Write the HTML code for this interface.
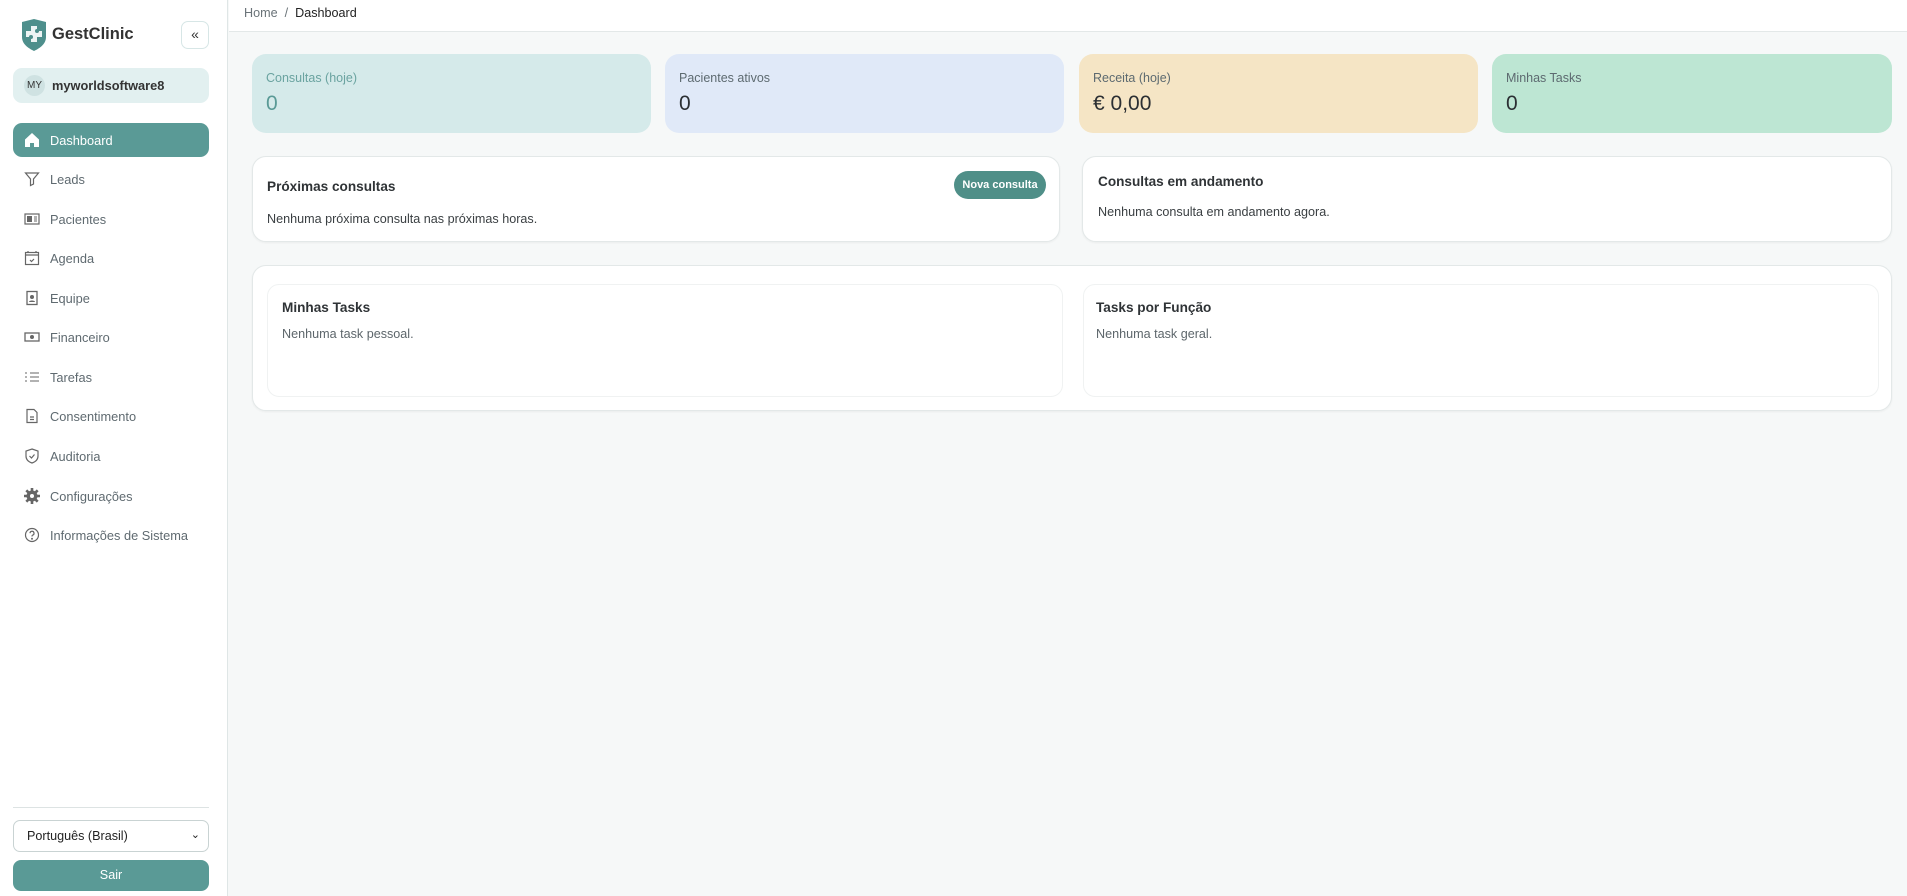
<!DOCTYPE html>
<html><head><meta charset="utf-8"><style>
*{box-sizing:border-box;margin:0;padding:0}
body{width:1907px;height:896px;overflow:hidden;background:#f6f8f8;font-family:"Liberation Sans",sans-serif;color:#2b2f33;position:relative}
.a{position:absolute}
#sb{left:0;top:0;width:228px;height:896px;background:#fff;border-right:1px solid #dfe6e6}
.mi{position:absolute;left:13px;width:196px;height:34px;display:flex;align-items:center;padding-left:11px;font-size:12.8px;color:#5f6a70}
.mi svg{width:16px;height:16px;margin-right:10px;flex:none}
.card{position:absolute;border-radius:14px}
.st .l{position:absolute;left:14px;top:17px;font-size:12.5px;color:#5d6a70}
.st .v{position:absolute;left:14px;top:38px;font-size:21px;color:#2b2f33}
.w{background:#fff;border:1px solid #e3e8e8;box-shadow:0 1px 2px rgba(0,0,0,.05)}
.h{font-size:13.6px;font-weight:bold;color:#2f3336}
.t{font-size:12.6px;color:#3a3f42}
</style></head><body>
<div id="sb" class="a">
 <svg class="a" style="left:20px;top:19px" width="28" height="32" viewBox="0 0 28 32"><path d="M2 3 L14 0 L26 3 V18 C26 25 20 29 14 32 C8 29 2 25 2 18Z" fill="#4e8f8c"/><path d="M11 7h6v5h5v6h-5v5h-6v-5H6v-6h5z" fill="#fff" opacity=".9"/><circle cx="11" cy="18" r="2" fill="#4e8f8c"/><circle cx="17" cy="12" r="2" fill="#4e8f8c"/></svg>
 <div class="a" style="left:52px;top:25px;font-size:16.5px;font-weight:bold;color:#333">GestClinic</div>
 <div class="a" style="left:181px;top:21px;width:28px;height:28px;border:1px solid #d7e6e6;border-radius:7px;font-size:14px;text-align:center;line-height:25px;color:#333">«</div>
 <div class="a" style="left:13px;top:68px;width:196px;height:35px;background:#e2f0f0;border-radius:9px"></div>
 <div class="a" style="left:24px;top:75px;width:21px;height:21px;border-radius:50%;background:#cfe2e2;font-size:10px;line-height:21px;text-align:center;color:#333">MY</div>
 <div class="a" style="left:52px;top:78px;font-size:12.8px;font-weight:bold;color:#333">myworldsoftware8</div>
 <div class="mi" style="top:123px;background:#5a9a96;color:#fff;border-radius:9px"><svg viewBox="0 0 16 16"><path d="M8 1L1 7.5V15h5v-4h4v4h5V7.5z" fill="#fff"/></svg>Dashboard</div>
 <div class="mi" style="top:162px"><svg viewBox="0 0 16 16" fill="none" stroke="#666" stroke-width="1.2"><path d="M1.5 2h13L9.5 8v5l-3 1.5V8z"/></svg>Leads</div>
 <div class="mi" style="top:202px"><svg viewBox="0 0 16 16"><rect x="1" y="3" width="14" height="10" fill="none" stroke="#666" stroke-width="1.2"/><rect x="3" y="5" width="5" height="6" fill="#666"/><path d="M10 6h3M10 8h3M10 10h3" stroke="#666"/></svg>Pacientes</div>
 <div class="mi" style="top:241px"><svg viewBox="0 0 16 16" fill="none" stroke="#666" stroke-width="1.2"><rect x="1.5" y="2.5" width="13" height="12"/><path d="M1.5 5h13M4 1v2M12 1v2M6 10l1.5 1.5L10 9"/></svg>Agenda</div>
 <div class="mi" style="top:281px"><svg viewBox="0 0 16 16"><rect x="3" y="1.5" width="10" height="13" fill="none" stroke="#666" stroke-width="1.3"/><circle cx="8" cy="7" r="2" fill="#666"/><path d="M5 12c0-2 6-2 6 0z" fill="#666"/></svg>Equipe</div>
 <div class="mi" style="top:320px"><svg viewBox="0 0 16 16"><rect x="1" y="4" width="14" height="8" fill="none" stroke="#666" stroke-width="1.3"/><circle cx="8" cy="8" r="2" fill="#666"/></svg>Financeiro</div>
 <div class="mi" style="top:360px"><svg viewBox="0 0 16 16" stroke="#666" stroke-width="1.1"><path d="M6 4h9M6 8h9M6 12h9M1 4h2M1 8h2M1 12h2"/></svg>Tarefas</div>
 <div class="mi" style="top:399px"><svg viewBox="0 0 16 16" fill="none" stroke="#666" stroke-width="1.2"><path d="M3 1.5h7l3 3v10H3z M6 9h4M6 11.5h4"/></svg>Consentimento</div>
 <div class="mi" style="top:439px"><svg viewBox="0 0 16 16" fill="none" stroke="#666" stroke-width="1.2"><path d="M8 1l6 2v5c0 4-3 6-6 7-3-1-6-3-6-7V3z M5.5 8l2 2 3-3.5"/></svg>Auditoria</div>
 <div class="mi" style="top:479px"><svg viewBox="0 0 16 16"><circle cx="8" cy="8" r="5.5" fill="#666"/><path d="M8 0v16M0 8h16M2.3 2.3l11.4 11.4M13.7 2.3L2.3 13.7" stroke="#666" stroke-width="2.6"/><circle cx="8" cy="8" r="2" fill="#fff"/></svg>Configurações</div>
 <div class="mi" style="top:518px"><svg viewBox="0 0 16 16" fill="none" stroke="#666" stroke-width="1.2"><circle cx="8" cy="8" r="6.5"/><path d="M6 6.2a2 2 0 1 1 2.5 2c-.5.2-.5.6-.5 1.3"/><circle cx="8" cy="11.7" r=".4" fill="#666"/></svg>Informações de Sistema</div>
 <div class="a" style="left:13px;top:807px;width:196px;height:1px;background:#dde3e3"></div>
 <div class="a" style="left:13px;top:820px;width:196px;height:32px;border:1px solid #c9d3d3;border-radius:7px;font-size:12.6px;padding:8px 13px;color:#222">Português (Brasil)<span style="position:absolute;right:8px;top:7px;font-size:11px">⌄</span></div>
 <div class="a" style="left:13px;top:860px;width:196px;height:31px;background:#5a9a96;border-radius:8px;color:#fff;font-size:12.6px;text-align:center;line-height:31px">Sair</div>
</div>
<div class="a" style="left:229px;top:0;width:1678px;height:32px;background:#fff;border-bottom:1px solid #e3e8e8"></div>
<div class="a" style="left:244px;top:6px;font-size:12.6px;color:#6a7378">Home &nbsp;/&nbsp; <span style="color:#222">Dashboard</span></div>

<div class="card st a" style="left:252px;top:54px;width:399px;height:79px;background:#d5eaea"><div class="l" style="color:#6aa3a0">Consultas (hoje)</div><div class="v" style="color:#5a9a96">0</div></div>
<div class="card st a" style="left:665px;top:54px;width:399px;height:79px;background:#e0e9f8"><div class="l">Pacientes ativos</div><div class="v">0</div></div>
<div class="card st a" style="left:1079px;top:54px;width:399px;height:79px;background:#f5e5c5"><div class="l">Receita (hoje)</div><div class="v">€ 0,00</div></div>
<div class="card st a" style="left:1492px;top:54px;width:400px;height:79px;background:#bde6d3"><div class="l">Minhas Tasks</div><div class="v">0</div></div>

<div class="card w a" style="left:252px;top:156px;width:808px;height:86px">
 <div class="h a" style="left:14px;top:22px">Próximas consultas</div>
 <div class="a" style="left:701px;top:14px;width:92px;height:28px;background:#4f8f88;border-radius:14px;color:#fff;font-size:11px;font-weight:bold;text-align:center;line-height:28px">Nova consulta</div>
 <div class="t a" style="left:14px;top:55px">Nenhuma próxima consulta nas próximas horas.</div>
</div>
<div class="card w a" style="left:1082px;top:156px;width:810px;height:86px">
 <div class="h a" style="left:15px;top:17px">Consultas em andamento</div>
 <div class="t a" style="left:15px;top:48px">Nenhuma consulta em andamento agora.</div>
</div>

<div class="card w a" style="left:252px;top:265px;width:1640px;height:146px">
 <div class="a" style="left:14px;top:18px;width:796px;height:113px;border:1px solid #f0f2f2;border-radius:12px">
  <div class="h a" style="left:14px;top:15px">Minhas Tasks</div>
  <div class="t a" style="left:14px;top:42px;color:#5d666b">Nenhuma task pessoal.</div>
 </div>
 <div class="a" style="left:830px;top:18px;width:796px;height:113px;border:1px solid #f0f2f2;border-radius:12px">
  <div class="h a" style="left:12px;top:15px">Tasks por Função</div>
  <div class="t a" style="left:12px;top:42px;color:#5d666b">Nenhuma task geral.</div>
 </div>
</div>
</body></html>
